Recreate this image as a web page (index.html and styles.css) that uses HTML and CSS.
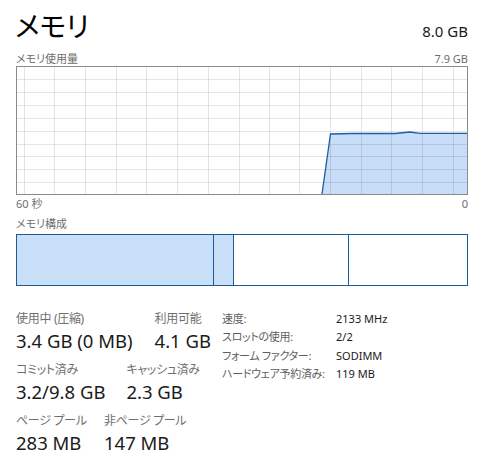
FILE: index.html
```html
<!DOCTYPE html>
<html lang="ja">
<head>
<meta charset="utf-8">
<title>メモリ</title>
<link rel="stylesheet" href="styles.css">
</head>
<body>
<div class="page">
  <header class="head">
    <h1 class="title">メモリ</h1>
    <div class="total">8.0 GB</div>
  </header>
  <div class="cap-row cap-top"><span>メモリ使用量</span><span class="num">7.9 GB</span></div>
  <div class="graph">
    <svg class="graph-svg" width="450" height="127" viewBox="0 0 450 127">
      <polygon class="area" points="305,127 313.5,67 334,66.5 378,66.5 393,65 403,66.3 450,66.3 450,127"/>
      <g class="grid">
        <line x1="0" y1="12.5" x2="450" y2="12.5"/>
        <line x1="0" y1="25.5" x2="450" y2="25.5"/>
        <line x1="0" y1="38.5" x2="450" y2="38.5"/>
        <line x1="0" y1="51.5" x2="450" y2="51.5"/>
        <line x1="0" y1="64.5" x2="450" y2="64.5"/>
        <line x1="0" y1="77.5" x2="450" y2="77.5"/>
        <line x1="0" y1="89.5" x2="450" y2="89.5"/>
        <line x1="0" y1="102.5" x2="450" y2="102.5"/>
        <line x1="0" y1="115.5" x2="450" y2="115.5"/>
        <line x1="7.5" y1="0" x2="7.5" y2="127"/>
        <line x1="37.5" y1="0" x2="37.5" y2="127"/>
        <line x1="68.5" y1="0" x2="68.5" y2="127"/>
        <line x1="99.5" y1="0" x2="99.5" y2="127"/>
        <line x1="129.5" y1="0" x2="129.5" y2="127"/>
        <line x1="160.5" y1="0" x2="160.5" y2="127"/>
        <line x1="191.5" y1="0" x2="191.5" y2="127"/>
        <line x1="222.5" y1="0" x2="222.5" y2="127"/>
        <line x1="252.5" y1="0" x2="252.5" y2="127"/>
        <line x1="282.5" y1="0" x2="282.5" y2="127"/>
        <line x1="313.5" y1="0" x2="313.5" y2="127"/>
        <line x1="344.5" y1="0" x2="344.5" y2="127"/>
        <line x1="374.5" y1="0" x2="374.5" y2="127"/>
        <line x1="405.5" y1="0" x2="405.5" y2="127"/>
        <line x1="436.5" y1="0" x2="436.5" y2="127"/>
      </g>
      <polyline class="trace" points="305,127 313.5,67 334,66.5 378,66.5 393,65 403,66.3 450,66.3"/>
    </svg>
  </div>
  <div class="cap-row cap-axis"><span>60 秒</span><span class="num">0</span></div>
  <div class="cap-row cap-comp"><span>メモリ構成</span></div>
  <div class="comp">
    <div class="seg seg-used"></div>
    <div class="seg seg-mod"></div>
    <div class="seg seg-standby"></div>
    <div class="seg seg-free"></div>
  </div>
  <div class="stats">
    <div class="stats-left">
      <div class="srow srow-use">
        <div class="cell"><div class="lbl">使用中 (圧縮)</div><div class="val">3.4 GB (0 MB)</div></div>
        <div class="cell"><div class="lbl">利用可能</div><div class="val">4.1 GB</div></div>
      </div>
      <div class="srow">
        <div class="cell"><div class="lbl">コミット済み</div><div class="val">3.2/9.8 GB</div></div>
        <div class="cell"><div class="lbl">キャッシュ済み</div><div class="val">2.3 GB</div></div>
      </div>
      <div class="srow srow-pool">
        <div class="cell cell-pool"><div class="lbl">ページ プール</div><div class="val">283 MB</div></div>
        <div class="cell"><div class="lbl">非ページ プール</div><div class="val">147 MB</div></div>
      </div>
    </div>
    <dl class="specs">
      <dt>速度:</dt><dd>2133 MHz</dd>
      <dt>スロットの使用:</dt><dd>2/2</dd>
      <dt>フォーム ファクター:</dt><dd>SODIMM</dd>
      <dt>ハードウェア予約済み:</dt><dd>119 MB</dd>
    </dl>
  </div>
</div>
</body>
</html>
```
FILE: styles.css
```css
html, body {
  margin: 0;
  padding: 0;
  background: #ffffff;
}
body {
  font-family: "Noto Sans", "Noto Sans CJK JP", sans-serif;
  font-feature-settings: "palt";
  color: #1a1a1a;
}
.page {
  width: 452px;
  padding: 0 0 0 16px;
}
.head {
  display: flex;
  justify-content: space-between;
  align-items: baseline;
  height: 51px;
  padding-top: 8px;
  box-sizing: border-box;
}
.title {
  margin: 0 0 0 -1px;
  font-size: 28px;
  font-weight: normal;
  line-height: 36px;
  color: #000;
}
.total {
  font-size: 15px;
  color: #1a1a1a;
}
.cap-row {
  display: flex;
  justify-content: space-between;
  font-size: 11px;
  color: #6e6e6e;
}
.cap-top {
  height: 15px;
  line-height: 15px;
}
.cap-axis {
  height: 18px;
  line-height: 18px;
}
.cap-comp {
  height: 21px;
  line-height: 21px;
}
.num {
  font-size: 11px;
}
.graph {
  border: 1px solid #8a8a8a;
  height: 127px;
}
.graph-svg {
  display: block;
}
.area {
  fill: #c8ddf7;
}
.grid line {
  stroke: #000;
  stroke-opacity: 0.1;
  stroke-width: 1;
}
.trace {
  fill: none;
  stroke: #1d5ea6;
  stroke-width: 1.3;
}
.comp {
  display: flex;
  height: 52px;
  box-sizing: border-box;
  border: 1px solid #1c5a9c;
}
.seg {
  border-right: 1px solid #1c5a9c;
}
.seg-used {
  width: 196px;
  background: #c9dff8;
}
.seg-mod {
  width: 19px;
  background: #c9dff8;
}
.seg-standby {
  width: 114px;
}
.seg-free {
  flex: 1;
  border-right: none;
}
.stats {
  display: flex;
  padding-top: 24px;
}
.stats-left {
  width: 206px;
  display: flex;
  flex-direction: column;
}
.srow {
  display: flex;
  gap: 21px;
  margin-bottom: 7px;
}
.srow-use {
  gap: 22px;
}
.srow-pool {
  gap: 22px;
}
.cell-pool {
  width: 66px;
}
.lbl {
  font-size: 12px;
  line-height: 18px;
  color: #6e6e6e;
  white-space: nowrap;
  letter-spacing: -0.3px;
}
.val {
  font-size: 18.5px;
  line-height: 26px;
  color: #1a1a1a;
  white-space: nowrap;
}
.specs {
  margin: 0;
  display: grid;
  grid-template-columns: 114px auto;
  grid-auto-rows: 18.4px;
  font-size: 11px;
  line-height: 18.4px;
  align-content: start;
  padding-top: 0;
}
.specs dt {
  color: #5e5e5e;
  white-space: nowrap;
  letter-spacing: -0.3px;
}
.specs dd {
  margin: 0;
  color: #1a1a1a;
}
```
